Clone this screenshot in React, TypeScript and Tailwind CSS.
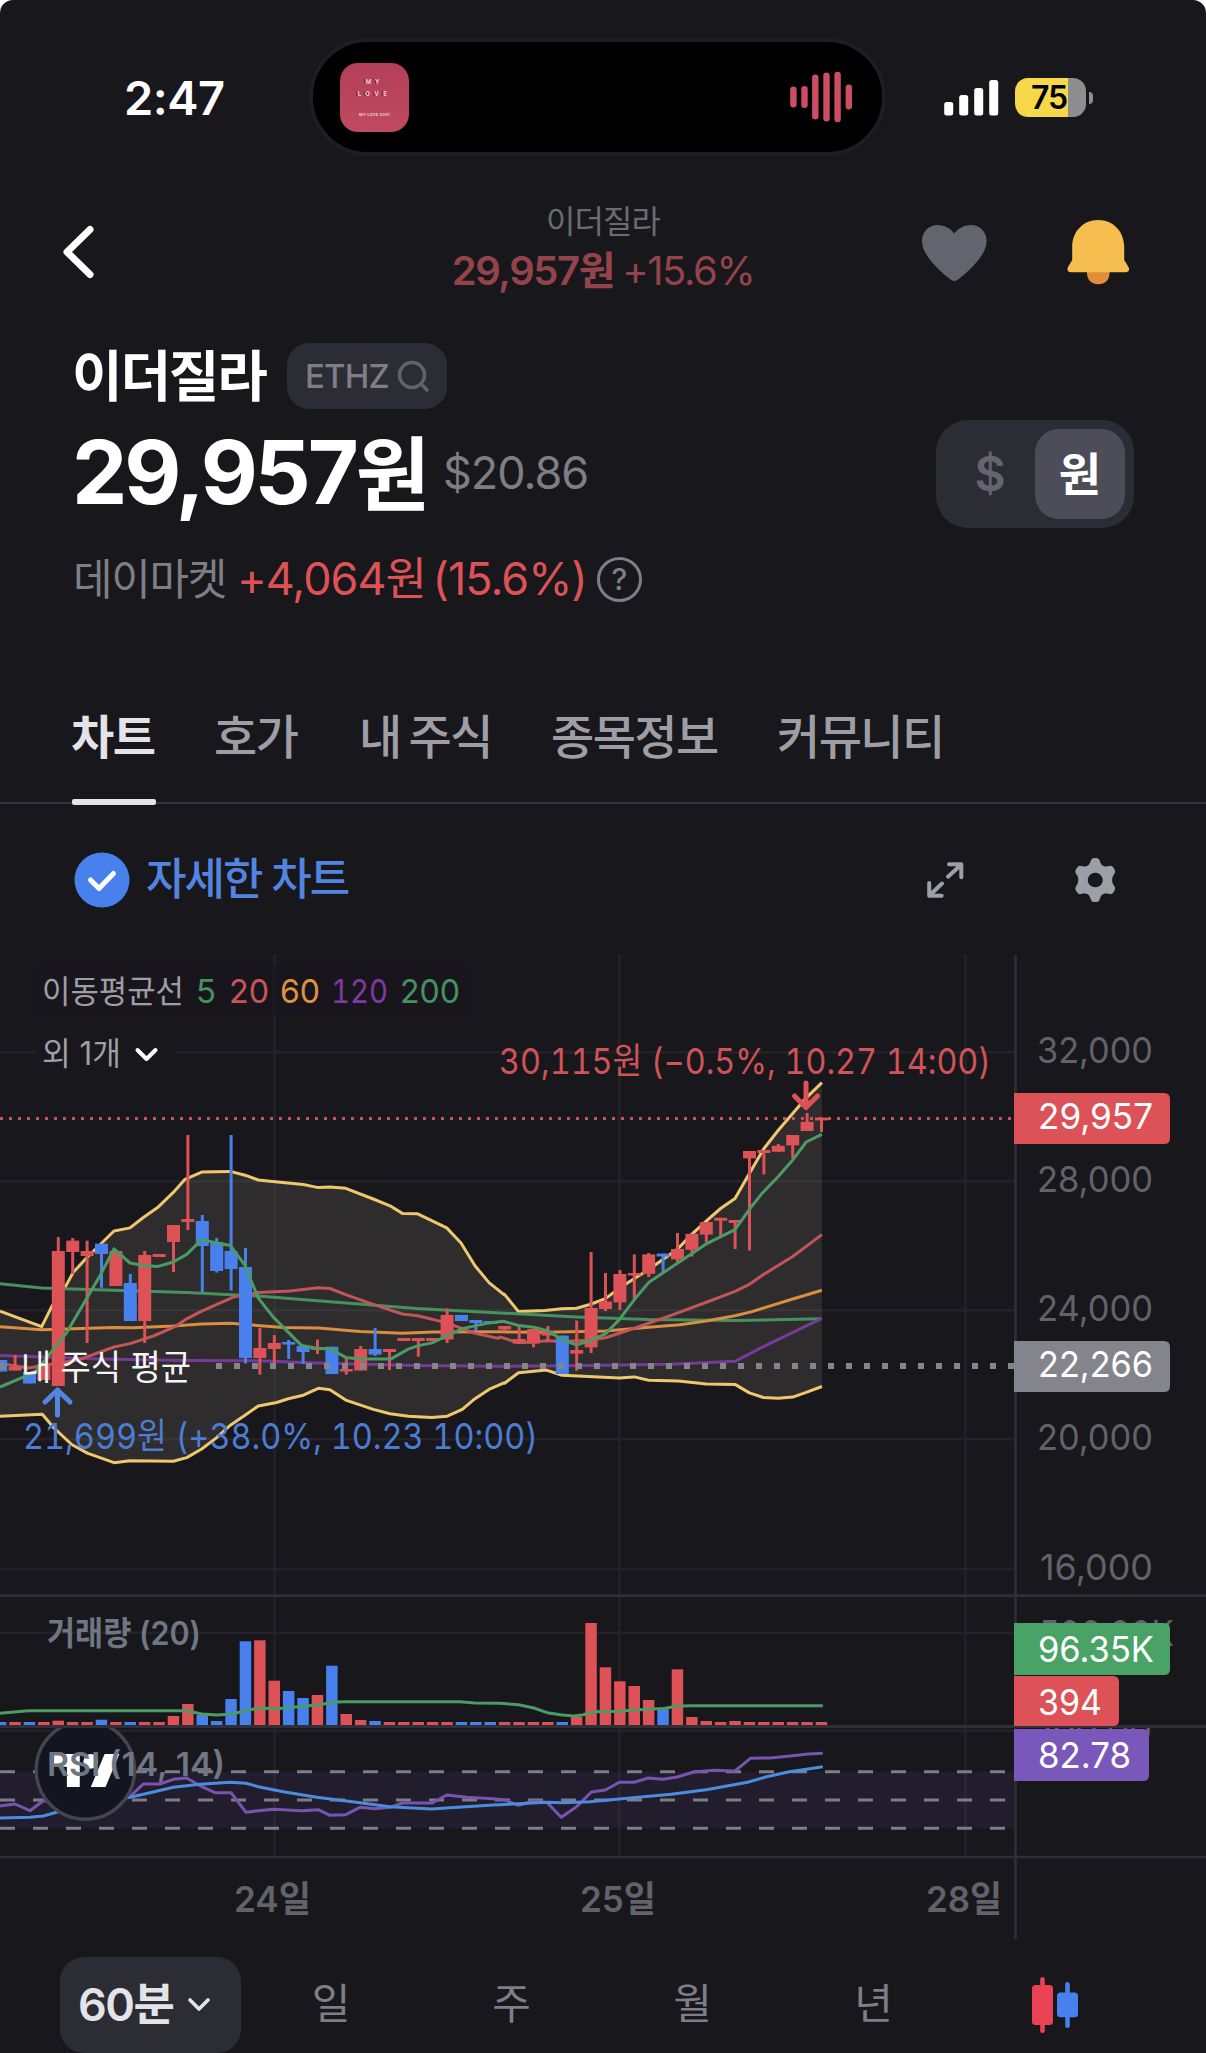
import React from "react";

type Pt = [number, number];

const RED = "#dd5257";
const BLUE = "#4880ee";
const GREEN = "#4aa366";

/* Plot coordinates: the price pane is digitised as two halves, left and right. */
const priceL = (p: Pt[]): Pt[] => p.map(([x, y]) => [x / 3, 940 + y / 2.904]);
const priceR = (p: Pt[]): Pt[] => p.map(([x, y]) => [500 + x / 2.221, 940 + y / 2.376]);
const lowL = (p: Pt[]): Pt[] => p.map(([x, y]) => [x / 3, 1580 + y / 3]);
const lowR = (p: Pt[]): Pt[] => p.map(([x, y]) => [500 + x / 2.221, 1580 + y / 3]);
const join = (p: Pt[]) => p.map(([x, y]) => `${x.toFixed(1)},${y.toFixed(1)}`).join(" ");

const upper = [
  ...priceL([[0,1078],[125,1123],[155,1065],[197,1005],[220,965],[258,925],[300,885],[342,845],[390,836],[430,806],[475,775],[520,733],[555,695],[605,674],[691,672],[735,683],[775,697],[825,702],[910,710],[955,719],[990,717],[1037,721],[1120,752],[1170,772],[1207,794],[1253,795],[1340,836],[1383,880],[1425,946],[1467,995],[1512,1030]]),
  ...priceR([[10,842],[41,883],[100,880],[137,876],[170,875],[200,866],[234,852],[268,825],[330,783],[394,735],[425,700],[458,668],[490,638],[522,614],[554,555],[585,497],[618,452],[680,375],[715,339]]),
];
const lower = [
  ...priceL([[0,1383],[127,1377],[160,1415],[215,1465],[262,1490],[342,1518],[390,1512],[520,1514],[560,1503],[605,1478],[650,1445],[690,1410],[735,1380],[775,1353],[830,1343],[865,1332],[910,1322],[955,1302],[990,1306],[1037,1336],[1120,1363],[1170,1376],[1225,1383],[1295,1387],[1342,1383],[1387,1363],[1425,1332],[1467,1305],[1512,1286]]),
  ...priceR([[10,1053],[41,1028],[103,1022],[138,1034],[265,1041],[298,1038],[330,1046],[397,1048],[458,1055],[522,1056],[554,1076],[585,1087],[618,1089],[650,1086],[680,1075],[715,1061]]),
];
const ma200 = [
  ...priceL([[0,998],[125,1011],[340,1017],[560,1024],[775,1034],[1000,1051],[1250,1070]]),
  ...priceR([[0,886],[170,896],[330,902],[520,904],[715,900]]),
];
const ma5 = [
  ...priceL([[0,1298],[68,1270],[110,1250],[200,1140],[300,975],[342,897],[390,938],[430,945],[475,948],[520,935],[560,913],[605,870],[650,880],[691,887],[735,945],[775,1040],[820,1095],[905,1178],[955,1186],[990,1187],[1037,1212],[1080,1217],[1172,1217],[1225,1188],[1255,1178],[1297,1170],[1345,1147],[1390,1128],[1467,1112],[1510,1107]]),
  ...priceR([[41,916],[75,920],[105,928],[138,950],[170,962],[200,952],[234,936],[265,902],[298,855],[330,814],[394,768],[458,722],[522,688],[554,640],[582,602],[618,562],[650,523],[680,480],[715,462]]),
];
const ma20 = [
  ...priceL([[0,1230],[85,1243],[240,1218],[342,1182],[390,1172],[460,1150],[525,1123],[560,1100],[605,1078],[700,1037],[775,1024],[870,1019],[955,1010],[990,1012],[1037,1030],[1120,1058],[1207,1086],[1253,1091],[1340,1112],[1425,1142],[1495,1157]]),
  ...priceR([[0,943],[41,957],[105,952],[138,954],[200,951],[234,945],[300,922],[380,892],[460,860],[522,835],[554,818],[582,797],[650,752],[715,700]]),
];
const ma60 = [
  ...priceL([[0,1123],[125,1132],[340,1125],[400,1126],[520,1121],[605,1115],[691,1113],[850,1125],[955,1127],[1080,1137],[1207,1142],[1300,1138]]),
  ...priceR([[0,931],[100,932],[234,929],[330,920],[400,914],[458,905],[522,893],[560,883],[650,853],[715,832]]),
];
const ma120 = [
  ...priceL([[0,1207],[300,1217],[560,1221],[775,1222],[950,1228],[1240,1236]]),
  ...priceR([[0,1013],[200,1011],[380,1008],[522,1001],[585,966],[715,899]]),
];
const volMa = [
  ...lowL([[0,400],[85,392],[560,392],[605,402],[650,405],[695,402],[775,384],[830,386],[950,375],[1010,366],[1040,365],[1380,365],[1425,369]]),
  ...lowR([[0,370],[41,374],[75,384],[105,398],[138,405],[165,408],[185,404],[210,395],[265,394],[340,386],[361,386],[395,378],[430,377],[717,377]]),
];
const rsi = [
  ...lowL([[0,678],[45,672],[90,692],[130,662],[300,670],[390,650],[430,612],[480,612],[520,598],[560,594],[605,620],[645,638],[693,638],[738,697],[775,692],[820,688],[905,692],[955,689],[990,706],[1037,704],[1080,682],[1125,686],[1170,682],[1207,669],[1297,669],[1340,645],[1400,652],[1480,656]]),
  ...lowR([[10,660],[41,676],[75,663],[105,668],[136,712],[170,680],[203,636],[234,630],[265,607],[298,607],[329,594],[361,598],[394,591],[430,576],[475,571],[522,573],[556,535],[600,534],[640,529],[685,522],[717,520]]),
];
const rsiMa = [
  ...lowL([[0,714],[90,712],[130,708],[170,697],[300,665],[390,652],[450,638],[520,622],[600,613],[691,607],[738,610],[775,620],[850,635],[950,652],[1080,668],[1170,680],[1295,687],[1350,683],[1480,675]]),
  ...lowR([[0,674],[105,667],[138,668],[200,665],[265,657],[380,643],[458,629],[550,607],[590,591],[640,576],[717,560]]),
];

/* [colour, body top, body bottom, wick top, wick bottom, volume height] */
type Candle = ["r" | "b", number, number, number, number, number];
const candles: Candle[] = [
  ["b",1360,1371.5,1360,1371.5,3],["r",1367,1370.5,1355,1370.5,3],["b",1372,1383.5,1372,1383.5,3],["r",1364,1380,1364,1380,3],
  ["r",1251,1386,1237,1386,4.3],["r",1240.6,1252,1238,1274,3],["r",1251,1256,1240.6,1343,3],["b",1243.7,1254,1243.7,1287.8,5.3],
  ["r",1251,1286,1251,1286,3],["b",1283,1321,1274,1321,3],["r",1255,1321,1251,1343,3],["r",1254,1257,1254,1257,3],
  ["r",1225,1242,1225,1272,9],["r",1219,1222,1135,1230,21],["b",1221,1246,1215,1292,10],["b",1242,1271,1238,1272.6,4],
  ["b",1251,1269,1135,1290.5,26],["b",1267,1358,1248,1363.5,83.7],["r",1348,1358,1328,1374.6,84.7],["r",1343,1349,1335,1363.5,44.3],
  ["b",1342,1344.6,1340,1359,34],["b",1346,1352,1346,1364,27],["r",1347,1350,1339.5,1354,30],["b",1346.7,1374,1346.7,1374,59.3],
  ["r",1369,1371.5,1357,1374.6,11],["r",1349,1370.5,1346,1370.5,5],["b",1349,1354.6,1328,1356,4],["r",1349,1352,1349,1370,3],
  ["r",1338,1341,1338,1341,3],["r",1338,1341,1338,1356.7,3],["r",1338,1341,1338,1341,3],["r",1315,1339.5,1308.5,1343,3],
  ["b",1315,1321,1315,1321,3],["b",1320,1323,1320,1331,3],["b",1321,1324,1321,1324,3],["r",1326,1329.5,1326,1331.5,3],
  ["r",1339,1343.6,1327,1343.6,3],["r",1329,1343.6,1329,1347.4,3],["r",1331.5,1335.6,1326,1340,3],["b",1335.6,1374,1335.6,1374,3],
  ["r",1350,1353.7,1320.5,1370.6,8.3],["r",1308,1347.4,1252,1353,102],["r",1301.5,1309,1273,1311,57.7],["r",1274,1302.4,1270,1310,43.7],
  ["r",1273,1275.5,1254.4,1299.4,39],["r",1254.4,1273.8,1253,1277,25],["b",1253.6,1256.5,1253.6,1272.5,15.7],["r",1249,1259.4,1233,1262,55.7],
  ["r",1233.8,1249.8,1233.8,1256.5,8],["r",1222,1234.6,1222,1242,4],["r",1217.8,1220.7,1217.8,1237,3],["r",1220,1223,1220,1249,4],
  ["r",1151,1158.4,1151,1250.6,3],["r",1150,1153,1150,1174.4,3],["r",1145.8,1151.7,1144,1151.7,3],["r",1135,1145.4,1135,1158,3],
  ["r",1121.8,1131,1113,1131,3],["r",1117.6,1120.4,1117.6,1132,3],
];
const cx = (i: number) => 58.3 + 14.4 * (i - 4);

const Line = ({ pts, color }: { pts: Pt[]; color: string }) => (
  <polyline points={join(pts)} fill="none" stroke={color} strokeWidth={3} strokeLinejoin="round" />
);

type LabelProps = { x: number; y: number; w: number; size: number; fill: string; weight?: number; tabular?: boolean; children: string };
const Label = ({ x, y, w, size, fill, weight = 400, tabular = false, children }: LabelProps) => (
  <text x={x} y={y} textLength={w} lengthAdjust="spacingAndGlyphs" fontSize={size} fontWeight={weight} fill={fill} className={tabular ? "tabular-nums" : "proportional-nums"}>
    {children}
  </text>
);

const Tag = ({ y, h, right, fill, base, w, children }: { y: number; h: number; right: number; fill: string; base: number; w: number; children: string }) => (
  <g>
    <path d={`M1014 ${y}H${right - 6}q6 0 6 6V${y + h - 6}q0 6 -6 6H1014Z`} fill={fill} />
    <Label x={1038} y={base} w={w} size={36} fill="#fff">{children}</Label>
  </g>
);

function Chart() {
  return (
    <svg width="1206" height="989" viewBox="0 955 1206 989" className="block">
      <defs>
        <clipPath id="rsiPane"><rect x="0" y="1728" width="1206" height="129" /></clipPath>
      </defs>

      <g stroke="#222228" strokeWidth="2.6">
        {[1052.4, 1181.4, 1310.4, 1439.3, 1569, 1632.7, 1730.8].map((y) => <path key={y} d={`M0 ${y}H1015`} />)}
        {[274.5, 619.4, 965.5].map((x) => <path key={x} d={`M${x} 955V1857`} />)}
      </g>
      <rect x="36" y="966" width="434" height="50" fill="#18171c" fillOpacity="0.7" />
      <rect x="36" y="1028" width="140" height="50" fill="#18171c" />
      <rect x="0" y="1771.7" width="1014" height="56.6" fill="#7e57c2" fillOpacity="0.1" />

      <polygon points={join([...upper, ...[...lower].reverse()])} fill="#f0dfb8" fillOpacity="0.105" />
      <Line pts={upper} color="#eec76f" />
      <Line pts={lower} color="#eec76f" />
      <Line pts={ma200} color="#46925f" />
      <Line pts={ma120} color="#763a98" />
      <Line pts={ma60} color="#d98e42" />
      <Line pts={ma20} color="#c0565a" />
      <path d="M0 1118.5H1014" stroke="#c2565a" strokeWidth="3" strokeDasharray="3 6" />

      {candles.map(([c, t, b, wt, wb, v], i) => (
        <g key={i} fill={c === "r" ? RED : BLUE}>
          <rect x={cx(i) - 1.5} y={wt} width="3" height={wb - wt} />
          <rect x={cx(i) - 6.5} y={t} width="13" height={b - t} />
          <rect x={cx(i) - 5.8} y={1725 - v} width="11.5" height={v} />
        </g>
      ))}
      <Line pts={ma5} color="#4a9c64" />
      <Line pts={volMa} color="#4a9c64" />
      <path d="M0 1366H5M216 1366H1014" stroke="#85858c" strokeWidth="6" strokeDasharray="6 12" />

      <g stroke="#2f2f37" strokeWidth="2.6">
        <path d="M0 1595.6H1206M0 1857H1206M1015.5 955V1939" />
        <path d="M0 1726.6H1206" strokeWidth="3" />
      </g>

      <g stroke="#7d7d86" strokeWidth="3" strokeDasharray="15 18">
        <path d="M0 1771.7H1006M0 1800H1006M0 1828.3H1006" />
      </g>
      <Line pts={rsi} color="#7853b0" />
      <Line pts={rsiMa} color="#4a8de0" />
      <g clipPath="url(#rsiPane)">
        <circle cx="85.4" cy="1770" r="49.2" fill="#131520" stroke="#44454e" strokeWidth="3.4" />
        <g transform="translate(54 1746.6) scale(1.84)" fill="#fff">
          <path d="M14 22H7V11H0V4h14v18zM28 22h-8l7.5-18h8L28 22z" />
          <circle cx="20" cy="8" r="4" />
        </g>
        <Label x={1038} y={1743} w={114} size={36} fill="#62626b">100.00</Label>
      </g>

      <Label x={42} y={1003} w={142} size={32} fill="#9e9ea6">이동평균선</Label>
      <Label x={196} y={1003} w={20} size={33} fill="#46925f">5</Label>
      <Label x={229} y={1003} w={40} size={33} fill="#c95559">20</Label>
      <Label x={280} y={1003} w={40} size={33} fill="#df9240">60</Label>
      <Label x={331} y={1003} w={57} size={33} tabular fill="#7f3aa0">120</Label>
      <Label x={400} y={1003} w={60} size={33} fill="#46925f">200</Label>
      <Label x={42} y={1065} w={79} size={32} fill="#9e9ea6">외 1개</Label>
      <path d="M137.500 1050l9 9 9-9" fill="none" stroke="#fff" strokeWidth="4" strokeLinecap="round" strokeLinejoin="round" />

      <Label x={499} y={1074} w={492} size={36} tabular fill="#d05358">30,115원 (−0.5%, 10.27 14:00)</Label>
      <path d="M806 1083v24M794.500 1096l11.500 11.500 11.500-11.500" fill="none" stroke={RED} strokeWidth="5" strokeLinecap="round" strokeLinejoin="round" />
      <path d="M57.500 1415v-23M45 1402l12.500-12 12.500 12" fill="none" stroke="#5585e0" strokeWidth="5" strokeLinecap="round" strokeLinejoin="round" />
      <Label x={23} y={1449.2} w={515} size={36} tabular fill="#4c7cd4">21,699원 (+38.0%, 10.23 10:00)</Label>
      <Label x={21} y={1379.5} w={170} size={35} fill="#f5f5f7">내 주식 평균</Label>
      <Label x={47} y={1645} w={154} size={33} weight={600} fill="#6e7783">거래량 (20)</Label>
      <Label x={47} y={1776} w={178} size={33} weight={600} fill="#6e7783">RSI (14, 14)</Label>

      <Label x={1037} y={1063} w={116} size={36} fill="#62626b">32,000</Label>
      <Label x={1037} y={1191.7} w={116} size={36} fill="#62626b">28,000</Label>
      <Label x={1037} y={1320.8} w={116} size={36} fill="#62626b">24,000</Label>
      <Label x={1037} y={1449.7} w={116} size={36} fill="#62626b">20,000</Label>
      <Label x={1040} y={1579.500} w={113} size={36} fill="#62626b">16,000</Label>
      <Label x={1039} y={1646} w={135} size={36} fill="#62626b">500.00K</Label>
      <Tag y={1093} h={51} right={1170} fill={RED} base={1129} w={115}>29,957</Tag>
      <Tag y={1341} h={51} right={1170} fill="#84848c" base={1376.5} w={115}>22,266</Tag>
      <Tag y={1623} h={52} right={1170} fill={GREEN} base={1662.3} w={116}>96.35K</Tag>
      <Tag y={1676} h={50} right={1119} fill={RED} base={1715} w={64}>394</Tag>
      <Tag y={1729} h={52} right={1149} fill="#7a57bb" base={1768} w={93}>82.78</Tag>

      <Label x={234} y={1912} w={77} size={36} weight={600} fill="#62626b">24일</Label>
      <Label x={580} y={1912} w={76} size={36} weight={600} fill="#62626b">25일</Label>
      <Label x={926} y={1912} w={76} size={36} weight={600} fill="#62626b">28일</Label>
    </svg>
  );
}

const wave: [number, number][] = [[793.4, 21], [804.5, 22], [815.3, 45], [826.5, 49], [837.6, 50.500], [848.8, 25]];

function StatusBar() {
  return (
    <div className="flex h-[157px] pt-[38px]">
      <div className="flex h-[119px] w-[309px] items-center pl-[124px] text-[47px] font-semibold leading-none tracking-[-0.500px] text-white">2:47</div>
      <div className="flex h-[118px] w-[577px] items-center justify-between rounded-full border-[4px] border-[#1d1d24] bg-black pl-[27px] pr-[29px]">
        <div className="flex h-[69px] w-[69px] flex-col items-center rounded-[18px] bg-linear-to-b from-[#b33f58] to-[#bf4a61] pt-[16px] font-bold leading-none text-[#f2ccd2]">
          <span className="text-[6px] tracking-[4px] [text-shadow:-2px_0_#7d2539]">MY</span>
          <span className="mt-[6px] text-[6px] tracking-[4.500px] [text-shadow:-2px_0_#7d2539]">LOVE</span>
          <span className="mt-[16px] text-[4px] tracking-[0.200px]">MY LOVE 2001</span>
        </div>
        <svg width="64" height="54" viewBox="789 70 64 54">
          {wave.map(([x, h]) => <rect key={x} x={x - 3.2} y={97 - h / 2} width="6.4" height={h} rx="3.2" fill="#cc4d64" />)}
        </svg>
      </div>
      <div className="flex h-[119px] items-center pl-[58px]">
        <svg width="55" height="36" viewBox="944 80 55 36" fill="#fff">
          <rect x="944.200" y="102" width="9" height="13.500" rx="2.500" />
          <rect x="959.200" y="95" width="9" height="20.500" rx="2.500" />
          <rect x="974.200" y="88" width="9" height="27.500" rx="2.500" />
          <rect x="989.200" y="80" width="9" height="35.500" rx="2.500" />
        </svg>
        <div className="ml-[16px] flex h-[39px] w-[71px] items-center justify-center rounded-[13px] bg-linear-to-r from-[#f7d84b] from-75% to-[#8e8e90] to-75% pr-[3px] text-[32px] font-semibold leading-none tracking-[-1px] text-black">75</div>
        <div className="ml-[3px] h-[12px] w-[4px] rounded-r-full bg-[#8e8e90]" />
      </div>
    </div>
  );
}

function NavBar() {
  return (
    <div className="flex h-[173px] items-start">
      <div className="w-[453px] pl-[60px] pt-[66px]">
        <svg width="36" height="58" viewBox="60 223 36 58"><path d="M90 229.500L67 252l23 22.500" fill="none" stroke="#fff" strokeWidth="7" strokeLinecap="round" strokeLinejoin="round" /></svg>
      </div>
      <div className="flex w-[300px] flex-col items-center pt-[47px]">
        <div className="h-[46px] whitespace-nowrap text-[32px] leading-[36px] tracking-[-1px] text-[#6b6b73]">이더질라</div>
        <div className="flex gap-[8px] whitespace-nowrap text-[40px] leading-[42px] text-[#93444b]">
          <span className="font-semibold tracking-[-1.400px]">29,957원</span>
          <span className="tracking-[-1.400px]">+15.6%</span>
        </div>
      </div>
      <svg className="ml-[167px] mt-[63px]" width="68" height="66" viewBox="920 220 68 66">
        <path d="M954.300 281c-2 0-4-1.500-6-3.200C934 266 922 253 922 241c0-9.500 7-16 15.500-16 7 0 13 3.500 16.800 8.500 3.800-5 9.800-8.500 16.800-8.500 8.500 0 15.500 6.500 15.500 16 0 12-12 25-26.300 36.800-2 1.700-4 3.200-6 3.200z" fill="#64646e" />
      </svg>
      <svg className="ml-[77px] mt-[61px]" width="66" height="68" viewBox="1065 218 66 68">
        <path d="M1087 270h22.500v3c0 7-4.500 11.300-11.200 11.300S1087 280 1087 273z" fill="#e08e3a" />
        <path d="M1098.200 220c-15.500 0-26 12-26 27v13l-4.200 7c-1.500 3 0 5.300 3 5.300h54.500c3 0 4.500-2.300 3-5.300l-4.300-7v-13c0-15-10.500-27-26-27z" fill="#f6be4e" />
      </svg>
    </div>
  );
}

function StockHeader() {
  return (
    <div className="h-[340px] pl-[72px] pr-[72px] pt-[13px]">
      <div className="flex h-[66px] items-center">
        <h1 className="w-[215px] whitespace-nowrap text-[55px] font-bold leading-[66px] tracking-[-2.200px] text-white">이더질라</h1>
        <div className="flex h-[66px] w-[160px] items-center justify-between rounded-[22px] bg-[#2c2c35] pl-[18px] pr-[18px] text-[33px] font-medium leading-none tracking-[-0.800px] text-[#7e7e87]">
          ETHZ
          <svg width="32" height="32" viewBox="396 361 32 32" fill="none" stroke="#62626b" strokeWidth="3.500" strokeLinecap="round"><circle cx="411" cy="376" r="12.500" /><path d="M420 385l6 6" /></svg>
        </div>
      </div>
      <div className="flex h-[128px] items-center justify-between">
        <div className="flex items-center whitespace-nowrap">
          <span className="w-[371px] text-[88px] font-bold leading-[110px] tracking-[-3.200px] text-white">29,957<span className="text-[81px]">원</span></span>
          <span className="text-[45px] tracking-[-1px] text-[#7e7e87]">$20.86</span>
        </div>
        <div className="mt-[2px] flex h-[108px] w-[198px] items-center rounded-[32px] bg-[#2c2c35] p-[9px] font-bold leading-none">
          <span className="w-[90px] text-center text-[48px] font-semibold text-[#65656f]">$</span>
          <span className="flex h-[90px] w-[90px] items-center justify-center rounded-[24px] bg-[#4d4d59] text-[46px] text-white">원</span>
        </div>
      </div>
      <div className="mt-[12px] flex h-[60px] items-center whitespace-nowrap text-[45px] leading-[60px]">
        <span className="w-[165px] pl-px text-[43px] tracking-[-1.300px] text-[#7e7e87]">데이마켓</span>
        <span className="w-[360px] tracking-[-1px] text-[#dd5257] [word-spacing:-5px]">+4,064원 (15.6%)</span>
        <span className="flex h-[45px] w-[45px] items-center justify-center rounded-full border-[3px] border-[#7e7e87] text-[30px] font-medium leading-none text-[#7e7e87]">?</span>
      </div>
    </div>
  );
}

function Tabs() {
  const tabs = [
    ["호가", "w-[145px]"],
    ["내 주식", "w-[192px]"],
    ["종목정보", "w-[226px]"],
    ["커뮤니티", "w-[180px]"],
  ];
  return (
    <nav className="flex h-[134px] items-start border-b-2 border-[#34343c] pl-[71px] text-[47px] font-medium leading-[133px] tracking-[-1.600px] text-[#9e9ea6] [word-spacing:-3px]">
      <div className="relative mr-[59px] h-[134px] w-[84px] whitespace-nowrap font-semibold text-[#e4e4e8]">
        <span className="block h-[132px] leading-[133px]">차트</span>
        <span className="absolute bottom-[-1px] left-[1px] h-[6px] w-[84px] rounded-[2px] bg-[#e4e4e8]" />
      </div>
      {tabs.map(([t, w]) => <div key={t} className={`${w} whitespace-nowrap`}>{t}</div>)}
    </nav>
  );
}

function ChartToolbar() {
  return (
    <div className="flex h-[151px] items-center pb-0 pl-[74px]">
      <svg width="56" height="56" viewBox="0 0 56 56"><circle cx="28" cy="28" r="27.500" fill={BLUE} /><path d="M16.500 28l8.500 8.500 14.500-15" fill="none" stroke="#fff" strokeWidth="5" strokeLinecap="round" strokeLinejoin="round" /></svg>
      <span className="ml-[16px] w-[778px] whitespace-nowrap pb-[2px] text-[44px] font-medium leading-none tracking-[-2px] text-[#5384e0]">자세한 차트</span>
      <svg width="40" height="40" viewBox="924 859.500 40 40" fill="none" stroke="#9e9ea6" strokeWidth="4" strokeLinecap="round" strokeLinejoin="round"><path d="M949 863.800h12.300v13M961 864.200l-13 12M929.200 882.500v12.800h12.500M929.500 895l12.500-12" /></svg>
      <svg className="ml-[108px]" width="46" height="48" viewBox="1072 856 46 48">
        <path fillRule="evenodd" fill="#9e9ea6" d="M1090.800 860.500Q1091.500 858 1094 858h2.500Q1099 858 1099.700 860.500C1101 865.500 1103.500 867.500 1109.500 866Q1112 865.300 1113.500 867.800l1.200 2Q1116 872 1114.200 874C1111.500 877.500 1111.500 882.500 1114.200 886Q1116 888 1114.700 890.200l-1.200 2Q1112 894.700 1109.500 894C1103.500 892.500 1101 894.500 1099.700 899.500Q1099 902 1096.500 902h-2.500Q1091.500 902 1090.800 899.500C1089.500 894.500 1087 892.500 1081 894Q1078.500 894.700 1077 892.200l-1.200-2Q1074.500 888 1076.300 886C1079 882.500 1079 877.500 1076.300 874Q1074.500 872 1075.800 869.800l1.200-2Q1078.500 865.300 1081 866C1087 867.500 1089.500 865.500 1090.800 860.500ZM1095.200 872.700a7.500 7.300 0 1 0 .1 0Z" />
      </svg>
    </div>
  );
}

function PeriodBar() {
  return (
    <div className="mt-[13px] grid h-[96px] grid-cols-6 px-[60px] text-center text-[42px] leading-[94px] text-[#7e7e87]">
      <div className="flex items-center gap-[14px] rounded-[24px] bg-[#2c2c35] pl-[18px] text-[45px] font-semibold tracking-[-1.500px] text-[#e4e4e8]">
        <span className="whitespace-nowrap">60분</span>
        <svg width="24" height="16" viewBox="0 0 24 16"><path d="M3 3l9 9 9-9" fill="none" stroke="#e4e4e8" strokeWidth="3.600" strokeLinecap="round" strokeLinejoin="round" /></svg>
      </div>
      <span className="pr-px">일</span>
      <span className="pr-[2px]">주</span>
      <span className="pr-[2px]">월</span>
      <span className="pr-[2px]">년</span>
      <div className="flex items-center justify-center">
        <svg width="48" height="58" viewBox="1032 1976 48 58">
          <g fill="#ea4254"><rect x="1032" y="1985" width="21" height="40" rx="3.500" /><rect x="1040.200" y="1977" width="4.600" height="56" rx="2.300" /></g>
          <g fill={BLUE}><rect x="1057" y="1992.600" width="21" height="24.600" rx="3.500" /><rect x="1065.200" y="1982" width="4.600" height="46" rx="2.300" /></g>
        </svg>
      </div>
    </div>
  );
}

export default function App() {
  return (
    <div className="h-[2053px] w-[1206px] overflow-hidden bg-white">
      <div className="h-[2053px] w-[1206px] overflow-hidden rounded-t-[13px] bg-[#18171c] font-['Inter','Noto_Sans_CJK_KR',sans-serif]">
        <StatusBar />
        <NavBar />
        <StockHeader />
        <Tabs />
        <ChartToolbar />
        <Chart />
        <PeriodBar />
      </div>
    </div>
  );
}
